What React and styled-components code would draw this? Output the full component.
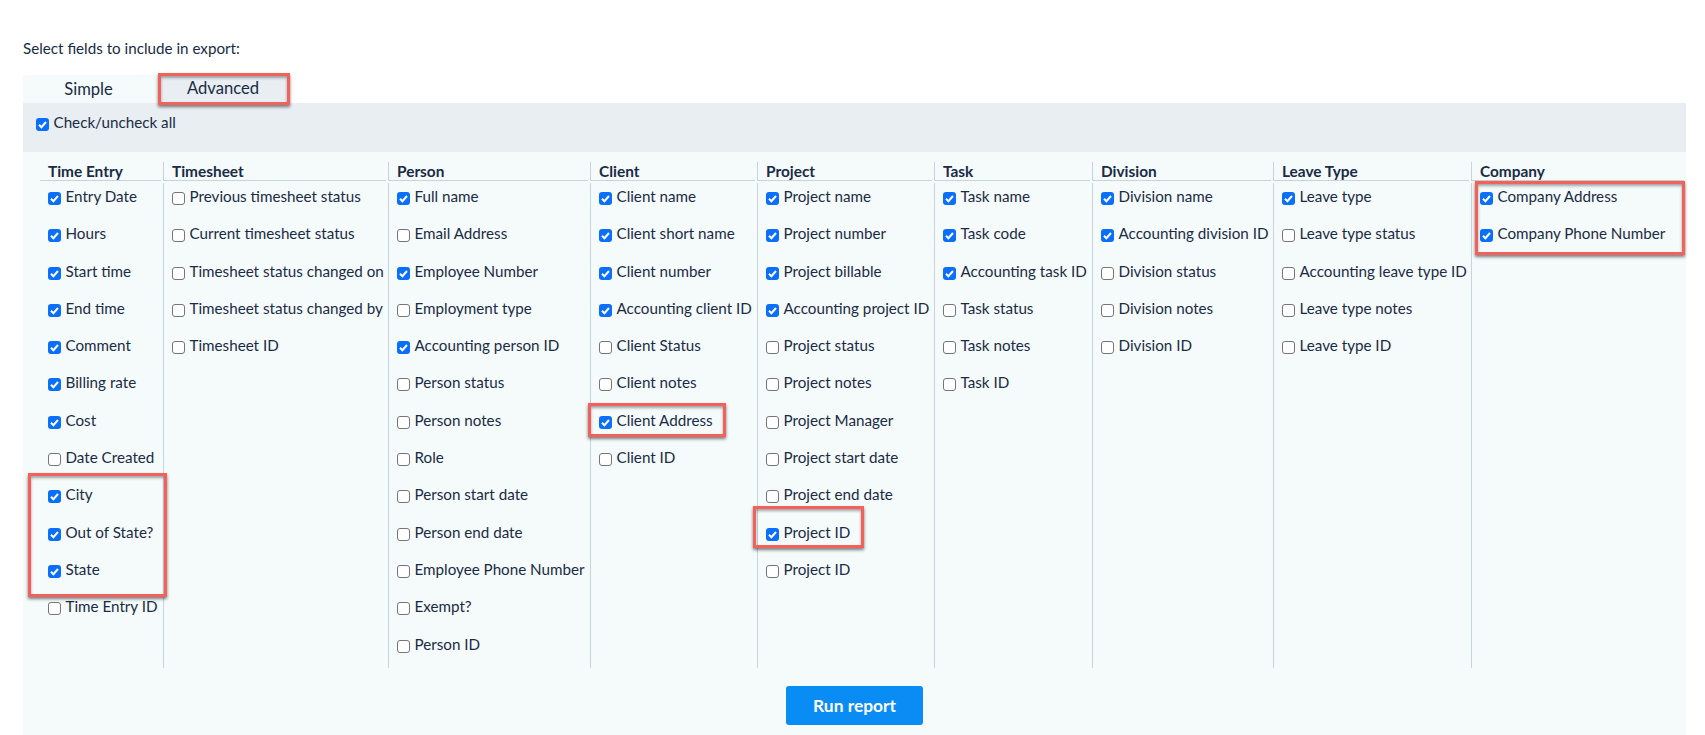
import React from "react";
import styled, { createGlobalStyle } from "styled-components";

const columns = [
  {
    title: "Time Entry",
    width: 140,
    first: true,
    fields: [
      ["Entry Date", 1],
      ["Hours", 1],
      ["Start time", 1],
      ["End time", 1],
      ["Comment", 1],
      ["Billing rate", 1],
      ["Cost", 1],
      ["Date Created", 0],
      ["City", 1],
      ["Out of State?", 1],
      ["State", 1],
      ["Time Entry ID", 0],
    ],
  },
  {
    title: "Timesheet",
    width: 225,
    fields: [
      ["Previous timesheet status", 0],
      ["Current timesheet status", 0],
      ["Timesheet status changed on", 0],
      ["Timesheet status changed by", 0],
      ["Timesheet ID", 0],
    ],
  },
  {
    title: "Person",
    width: 202,
    fields: [
      ["Full name", 1],
      ["Email Address", 0],
      ["Employee Number", 1],
      ["Employment type", 0],
      ["Accounting person ID", 1],
      ["Person status", 0],
      ["Person notes", 0],
      ["Role", 0],
      ["Person start date", 0],
      ["Person end date", 0],
      ["Employee Phone Number", 0],
      ["Exempt?", 0],
      ["Person ID", 0],
    ],
  },
  {
    title: "Client",
    width: 167,
    fields: [
      ["Client name", 1],
      ["Client short name", 1],
      ["Client number", 1],
      ["Accounting client ID", 1],
      ["Client Status", 0],
      ["Client notes", 0],
      ["Client Address", 1],
      ["Client ID", 0],
    ],
  },
  {
    title: "Project",
    width: 177,
    fields: [
      ["Project name", 1],
      ["Project number", 1],
      ["Project billable", 1],
      ["Accounting project ID", 1],
      ["Project status", 0],
      ["Project notes", 0],
      ["Project Manager", 0],
      ["Project start date", 0],
      ["Project end date", 0],
      ["Project ID", 1],
      ["Project ID", 0],
    ],
  },
  {
    title: "Task",
    width: 158,
    fields: [
      ["Task name", 1],
      ["Task code", 1],
      ["Accounting task ID", 1],
      ["Task status", 0],
      ["Task notes", 0],
      ["Task ID", 0],
    ],
  },
  {
    title: "Division",
    width: 181,
    fields: [
      ["Division name", 1],
      ["Accounting division ID", 1],
      ["Division status", 0],
      ["Division notes", 0],
      ["Division ID", 0],
    ],
  },
  {
    title: "Leave Type",
    width: 198,
    fields: [
      ["Leave type", 1],
      ["Leave type status", 0],
      ["Accounting leave type ID", 0],
      ["Leave type notes", 0],
      ["Leave type ID", 0],
    ],
  },
  {
    title: "Company",
    width: 215,
    fields: [
      ["Company Address", 1],
      ["Company Phone Number", 1],
    ],
  },
];

const highlights = [
  { left: 135, top: -2, width: 132, height: 32 },
  { left: 5, top: 398, width: 139, height: 124 },
  { left: 565, top: 328, width: 138, height: 34 },
  { left: 730, top: 431, width: 111, height: 42 },
  { left: 1452, top: 106, width: 210, height: 74 },
];

function Check({ checked }) {
  return (
    <Box $checked={checked}>
      {checked ? (
        <svg width="13" height="13" viewBox="0 0 13 13">
          <path d="M3 6.8 L5.4 9.2 L10 4" fill="none" stroke="#fff" strokeWidth="2" />
        </svg>
      ) : null}
    </Box>
  );
}

export default function App() {
  return (
    <>
      <GlobalStyle />
      <Page>
        <Intro>Select fields to include in export:</Intro>
        <Panel>
          <Tabs>
            <Tab $width={135}>Simple</Tab>
            <Tab $active $width={130}>
              Advanced
            </Tab>
          </Tabs>
          <CheckAllBar>
            <Field>
              <Check checked />
              <span>Check/uncheck all</span>
            </Field>
          </CheckAllBar>
          <Content>
            <Grid>
              {columns.map((col) => (
                <Column key={col.title} $width={col.width} $first={col.first}>
                  <ColumnTitle $first={col.first}>{col.title}</ColumnTitle>
                  <FieldList $first={col.first}>
                    {col.fields.map(([label, on], i) => (
                      <Row key={i}>
                        <Field>
                          <Check checked={!!on} />
                          <span>{label}</span>
                        </Field>
                      </Row>
                    ))}
                  </FieldList>
                </Column>
              ))}
            </Grid>
            <Footer>
              <RunButton>Run report</RunButton>
            </Footer>
          </Content>
          {highlights.map((h, i) => (
            <Highlight key={i} style={h} />
          ))}
        </Panel>
      </Page>
    </>
  );
}

const GlobalStyle = createGlobalStyle`
  html, body {
    margin: 0;
    background: #fff;
    color: #1a2b45;
    font-family: Lato, "Noto Sans", sans-serif;
  }
  * {
    box-sizing: border-box;
  }
`;

const Page = styled.div`
  width: 1705px;
  height: 735px;
  overflow: hidden;
  padding: 0 19px 0 23px;
`;

const Intro = styled.p`
  margin: 0;
  padding-top: 39px;
  height: 75px;
  font-size: 15.2px;
  line-height: 18px;
`;

const Panel = styled.div`
  position: relative;
  width: 1663px;
  height: 660px;
`;

const Tabs = styled.div`
  display: flex;
  height: 28px;
`;

const Tab = styled.div`
  width: ${(p) => p.$width}px;
  margin-left: ${(p) => (p.$active ? "2px" : "0")};
  padding-right: 4px;
  padding-bottom: ${(p) => (p.$active ? "2px" : "0")};
  display: flex;
  align-items: center;
  justify-content: center;
  font-size: 16.6px;
  background: ${(p) => (p.$active ? "#e8eef2" : "#f5fafb")};
`;

const CheckAllBar = styled.div`
  height: 49px;
  padding: 10px 0 0 13px;
  background: #e8eef2;
`;

const Content = styled.div`
  height: 583px;
  background: #f5fafb;
`;

const Grid = styled.div`
  display: flex;
  padding-top: 10px;
`;

const Column = styled.div`
  width: ${(p) => p.$width}px;
  flex: none;
`;

const ColumnTitle = styled.div`
  height: 19px;
  margin-right: 2px;
  margin-left: ${(p) => (p.$first ? "17px" : "0")};
  padding-left: 8px;
  border-left: ${(p) => (p.$first ? "none" : "1px solid #c9d3dc")};
  border-bottom: 1px solid #c9d3dc;
  font-size: 15.4px;
  font-weight: 700;
  line-height: 19px;
`;

const FieldList = styled.div`
  height: 485px;
  margin-top: 2px;
  padding-left: ${(p) => (p.$first ? "25px" : "8px")};
  border-left: ${(p) => (p.$first ? "none" : "1px solid #c9d3dc")};
`;

const Row = styled.div`
  height: 37.3px;
  padding-top: 4px;
`;

const Field = styled.label`
  display: flex;
  align-items: flex-start;
  gap: 4.5px;
  font-size: 15.2px;
  line-height: 18px;
  white-space: nowrap;
`;

const Box = styled.span`
  flex: none;
  width: 13px;
  height: 13px;
  margin-top: 5px;
  border-radius: 3px;
  background: ${(p) => (p.$checked ? "#0b6ffd" : "#fff")};
  border: ${(p) => (p.$checked ? "none" : "1px solid #767676")};

  svg {
    display: block;
  }
`;

const Footer = styled.div`
  display: flex;
  justify-content: center;
  padding: 18px 0 0 0;
`;

const RunButton = styled.button`
  width: 137px;
  height: 39px;
  border: none;
  border-radius: 3px;
  background: #0a8cf5;
  color: #fff;
  font-family: inherit;
  font-size: 17.4px;
  font-weight: 700;
`;

const Highlight = styled.div`
  position: absolute;
  border: 3px solid #f2615a;
  box-shadow: 0 2px 3px rgba(0, 0, 0, 0.5), inset 0 2px 3px rgba(0, 0, 0, 0.35);
  pointer-events: none;
`;
